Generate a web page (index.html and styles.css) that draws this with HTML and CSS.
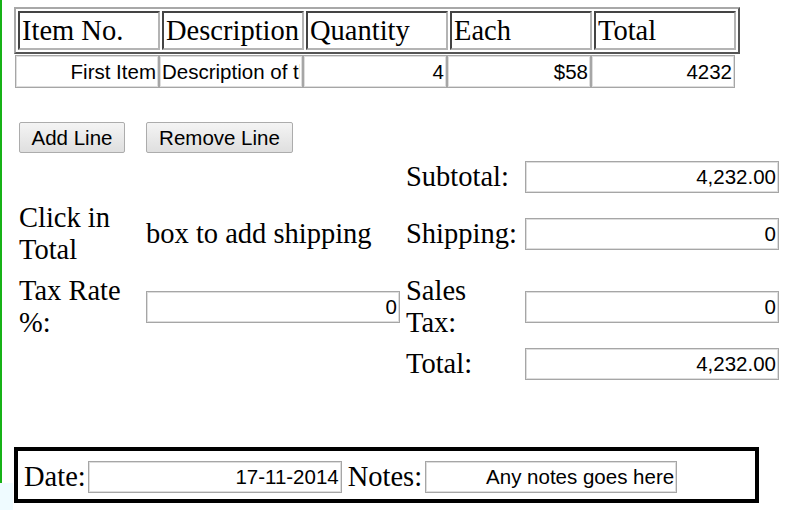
FILE: index.html
```html
<!DOCTYPE html>
<html lang="en">
<head>
    <meta charset="UTF-8">
    <title>Invoice</title>
    <link rel="stylesheet" href="styles.css">
</head>
<body>
    <form class="invoice">
        <table class="items">
            <tr>
                <th>Item No.</th>
                <th>Description</th>
                <th>Quantity</th>
                <th>Each</th>
                <th>Total</th>
            </tr>
        </table>

        <div class="line">
            <input class="field" value="First Item">
            <input class="field left" value="Description of the item">
            <input class="field" value="4">
            <input class="field" value="$58">
            <input class="field" value="4232">
        </div>

        <div class="actions">
            <button type="button" class="btn">Add Line</button>
            <button type="button" class="btn">Remove Line</button>
        </div>

        <div class="summary">
            <span></span>
            <span></span>
            <label class="label">Subtotal:</label>
            <input class="field wide" value="4,232.00">

            <span class="label">Click in Total</span>
            <span class="label">box to add shipping</span>
            <label class="label">Shipping:</label>
            <input class="field wide" value="0">

            <label class="label">Tax Rate %:</label>
            <input class="field wide" value="0">
            <label class="label">Sales Tax:</label>
            <input class="field wide" value="0">

            <span></span>
            <span></span>
            <label class="label">Total:</label>
            <input class="field wide" value="4,232.00">
        </div>

        <div class="footer-box">
            <label class="label date-label">Date:</label>
            <input class="field wide" value="17-11-2014">
            <label class="label notes-label">Notes:</label>
            <input class="field notes" value="Any notes goes here">
        </div>
    </form>
</body>
</html>
```

FILE: styles.css
```css
html {
    background:
        linear-gradient(#17b217, #17b217) 0 0 / 2px 483px no-repeat,
        linear-gradient(#effbff, #effbff) 0 483px / 13px 27px no-repeat,
        #ffffff;
}

body {
    margin: 0;
    padding: 7px 0 0 14px;
    font-family: "Liberation Serif", "Times New Roman", serif;
    font-size: 28.5px;
    color: #000;
}

.items {
    width: 726px;
    border: 2px solid;
    border-color: #a8a8a8 #555 #555 #a8a8a8;
    border-spacing: 2px;
    table-layout: fixed;
}

.items th {
    font-weight: normal;
    text-align: left;
    height: 33px;
    line-height: 32px;
    padding: 1px 2px;
    border: 2px solid;
    border-color: #444 #b4b4b4 #b4b4b4 #444;
    white-space: nowrap;
    overflow: hidden;
}

.field {
    box-sizing: border-box;
    height: 32px;
    margin: 0;
    padding: 0 2px;
    border: 1px solid #a6a6a6;
    box-shadow: inset 0 0 0 1px #dedede;
    background: #fff;
    font-family: "Liberation Sans", Arial, sans-serif;
    font-size: 20.5px;
    color: #000;
    text-align: right;
    outline: none;
}

.field.left {
    text-align: left;
}

.line {
    display: flex;
    margin: 1px 0 0 1px;
}

.line .field {
    width: 144px;
    height: 33px;
}

.actions {
    display: flex;
    gap: 21px;
    margin: 34px 0 0 5px;
}

.btn {
    height: 31px;
    padding: 0 11px;
    border: 1px solid #acacac;
    border-radius: 2px;
    background: linear-gradient(#f4f4f4, #dfdfdf);
    font-family: "Liberation Sans", Arial, sans-serif;
    font-size: 20.5px;
    color: #000;
}

.btn:first-child {
    width: 106px;
}

.btn:last-child {
    width: 147px;
}

.summary {
    display: grid;
    grid-template-columns: 127px 260px 119px 254px;
    row-gap: 9px;
    align-items: center;
    margin: 8px 0 0 5px;
}

.label {
    line-height: 32px;
    padding-right: 6px;
}

.field.wide {
    width: 254px;
}

.footer-box {
    box-sizing: border-box;
    width: 745px;
    display: flex;
    align-items: center;
    margin-top: 67px;
    padding: 10px 6px 6px;
    border: 4px solid #000;
}

.date-label {
    padding-right: 0;
    margin-right: 2px;
}

.notes-label {
    padding-right: 0;
    margin: 0 3px 0 6px;
}

.field.notes {
    width: 252px;
}
```
